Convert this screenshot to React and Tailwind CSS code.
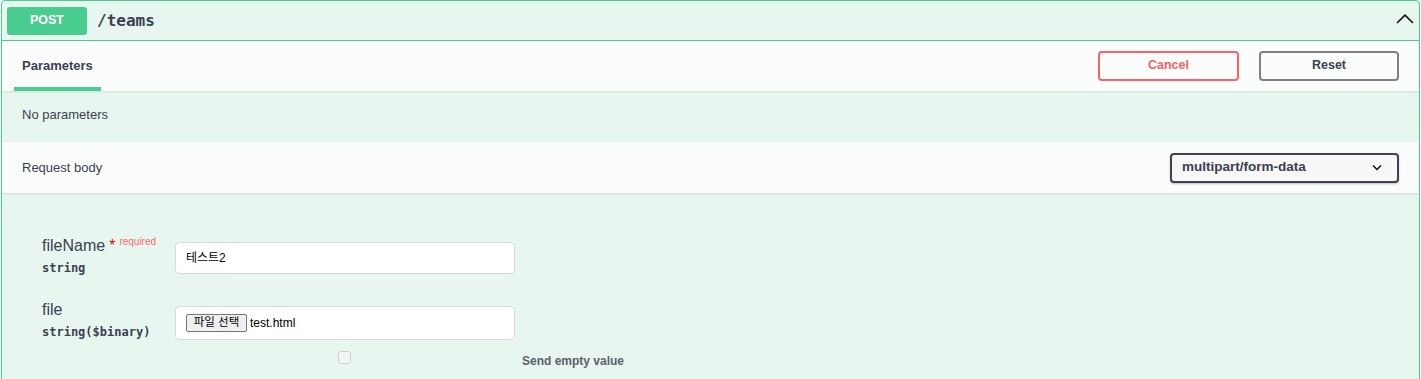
export default function App() {
  const sans = { fontFamily: '"Liberation Sans", "Noto Sans CJK KR", sans-serif' };
  const mono = { fontFamily: '"DejaVu Sans Mono", "Liberation Mono", monospace' };
  return (
    <div className="w-[1421px] h-[379px] overflow-hidden bg-white" style={sans}>
      <div className="ml-px w-[1419px] h-[420px] border border-[#49cc90] rounded-t-[4px] bg-[#e8f6f0]">
        {/* header */}
        <div className="flex items-center h-[40px] pl-[5px] pr-[5px] border-b border-[#49cc90]">
          <div className="w-[80px] h-[28px] rounded-[3px] bg-[#49cc90] text-white text-[12.5px] font-bold flex items-center justify-center">POST</div>
          <div className="ml-[10px] text-[16px] font-bold text-[#3b4151]" style={mono}>/teams</div>
          <div className="flex-1" />
          <svg width="18" height="10" viewBox="0 0 18 10" className="mb-[3px]">
            <path d="M1 9 L9 1.2 L17 9" fill="none" stroke="#111" strokeWidth="1.6" />
          </svg>
        </div>
        {/* parameters header */}
        <div className="h-[50px] bg-white/80 shadow-[0_1px_2px_rgba(0,0,0,0.1)] flex items-stretch pl-[12px] pr-[20px]">
          <div className="flex flex-col">
            <div className="flex-1 flex items-center px-[8px] pt-[3px] text-[13px] font-bold text-[#3b4151]">Parameters</div>
            <div className="h-[4px] bg-[#49cc90]" />
          </div>
          <div className="flex-1" />
          <div className="flex items-center gap-[20px] pb-[1px]">
            <button className="w-[141px] h-[30px] border-2 border-[#ff6060] rounded-[4px] text-[#ff6060] text-[12.5px] font-bold bg-transparent">Cancel</button>
            <button className="w-[140px] h-[30px] border-2 border-[#808080] rounded-[4px] text-[#3b4151] text-[12.5px] font-bold bg-transparent">Reset</button>
          </div>
        </div>
        {/* no parameters */}
        <div className="h-[51px] flex items-center px-[20px] pb-[4px] text-[13px] text-[#3b4151]">No parameters</div>
        {/* request body header */}
        <div className="h-[51px] bg-white/80 shadow-[0_1px_2px_rgba(0,0,0,0.1)] flex items-center pl-[20px] pr-[20px]">
          <div className="text-[13px] text-[#3b4151]">Request body</div>
          <div className="flex-1" />
          <div className="w-[229px] h-[30px] border-2 border-[#41444e] rounded-[4px] bg-[#f7f7f7] flex items-center pl-[10px] pr-[15px] shadow-[0_1px_2px_rgba(0,0,0,0.25)]">
            <span className="text-[13.5px] font-bold text-[#3b4151]">multipart/form-data</span>
            <div className="flex-1" />
            <svg width="10" height="7" viewBox="0 0 10 7">
              <path d="M1 1.5 L5 5.5 L9 1.5" fill="none" stroke="#111" strokeWidth="1.5" />
            </svg>
          </div>
        </div>
        {/* body */}
        <div className="pt-[42px] pl-[40px]">
          <div className="flex items-start h-[64px]">
            <div className="w-[133px] pt-[1px]">
              <div className="flex items-start leading-[20px] text-[#3b4151]">
                <span className="text-[16px]">fileName</span>
                <span className="text-[16px] text-[#ff0000] ml-[4px]">*</span>
                <span className="text-[10px] text-[#ff6a6a] ml-[4px] mt-[-4px]">required</span>
              </div>
              <div className="text-[12px] leading-[16px] font-bold text-[#3b4151] mt-[4px]" style={mono}>string</div>
            </div>
            <div className="mt-[7px] w-[340px] h-[32px] bg-white border border-[#d9d9d9] rounded-[4px] flex items-center px-[10px] text-black">
              <span className="text-[12px]">테스트2</span>
            </div>
          </div>
          <div className="flex items-start h-[41px]">
            <div className="w-[133px] pt-[1px]">
              <div className="text-[16px] leading-[20px] text-[#3b4151]">file</div>
              <div className="text-[12px] leading-[16px] font-bold text-[#3b4151] mt-[4px]" style={mono}>string($binary)</div>
            </div>
            <div className="mt-[7px] w-[340px] h-[34px] bg-white border border-[#d9d9d9] rounded-[4px] flex items-center pl-[10px] text-[12px] text-black">
              <span className="h-[18px] w-[61px] border border-[#767676] rounded-[2px] bg-[#efefef] flex items-center justify-center text-[11.5px] text-black">파일 선택</span>
              <span className="ml-[3px]">test.html</span>
            </div>
          </div>
          <div className="flex items-start mt-[11px]">
            <div className="ml-[296px] w-[13px] h-[13px] border border-[#cfcfcf] rounded-[3px] bg-[#f4f6f5]" />
            <div className="ml-[171px] mt-[2px] text-[12px] leading-[16px] font-bold text-[#5b616e]">Send empty value</div>
          </div>
        </div>
      </div>
    </div>
  );
}
